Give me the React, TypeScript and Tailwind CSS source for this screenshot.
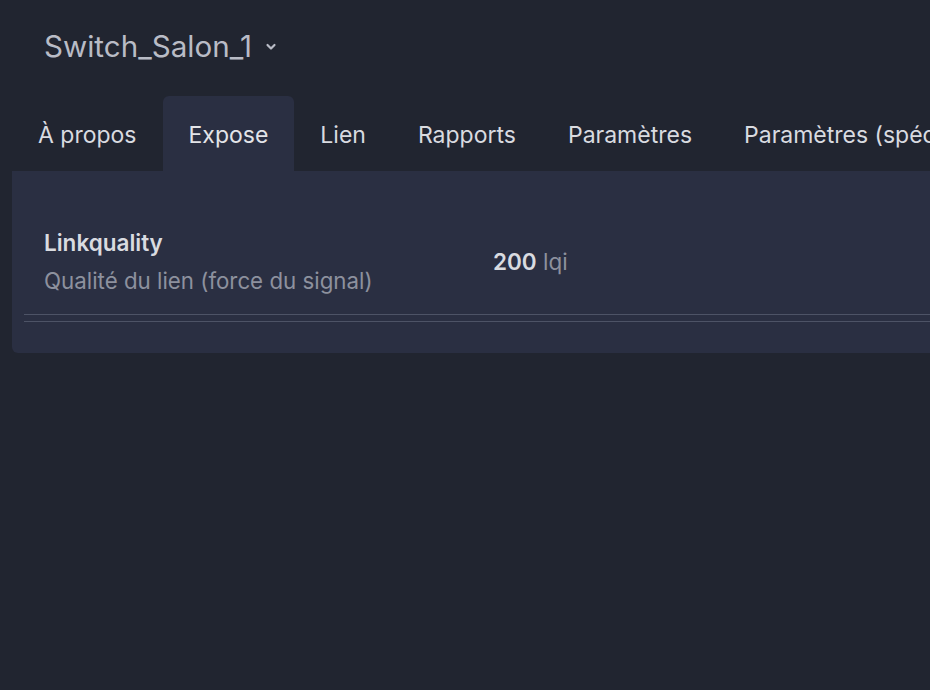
import React from 'react';

const tabs = ['À propos', 'Expose', 'Lien', 'Rapports', 'Paramètres', 'Paramètres (spécifiques)'];

const App: React.FC = () => {
  return (
    <div
      className="min-h-[690px] w-[930px] overflow-hidden bg-[#212530] text-[#e3e4e8]"
      style={{ fontFamily: 'Inter, "Noto Sans", sans-serif' }}
    >
      {/* device name */}
      <div className="flex items-start gap-[13px] pl-[44px] pt-[26px] h-[96px]">
        <h1 className="text-[29.6px] leading-[40px] text-[#b9bcc6]">Switch_Salon_1</h1>
        <svg className="mt-[15px] w-[12px] h-[12px] text-[#b9bcc6]" viewBox="0 0 12 12" fill="none">
          <path d="M2.5 4 6 7.5 9.5 4" stroke="currentColor" strokeWidth="2.2" strokeLinecap="round" strokeLinejoin="round" />
        </svg>
      </div>

      {/* tabs */}
      <div className="flex pl-[12px] whitespace-nowrap">
        {tabs.map((tab) => (
          <div
            key={tab}
            className={
              'h-[75px] px-[26px] pt-[3px] flex items-center text-[23px] rounded-t-[6px] ' +
              (tab === 'Expose' ? 'bg-[#2a2f42] text-[#e3e4e8]' : 'text-[#d9dbe0]')
            }
          >
            {tab}
          </div>
        ))}
      </div>

      {/* panel */}
      <div className="ml-[12px] bg-[#2a2f42] rounded-bl-[6px] h-[182px] pl-[12px] pt-[58px]">
        <div className="flex items-center pl-[20px]">
          <div className="w-[449px]">
            <div className="text-[22.5px] font-semibold text-[#d9dbe0] leading-[28px]">Linkquality</div>
            <div className="text-[22.3px] text-[#8d919e] leading-[28px] mt-[10px]">Qualité du lien (force du signal)</div>
          </div>
          <div className="text-[22.5px] text-[#d9dbe0]">
            <span className="font-semibold">200</span>{' '}
            <span className="text-[#8d919e]">lqi</span>
          </div>
        </div>
        <div className="border-t border-[#4d5366] mt-[19px]" />
        <div className="border-t border-[#4d5366] mt-[6px]" />
      </div>
    </div>
  );
};

export default App;
